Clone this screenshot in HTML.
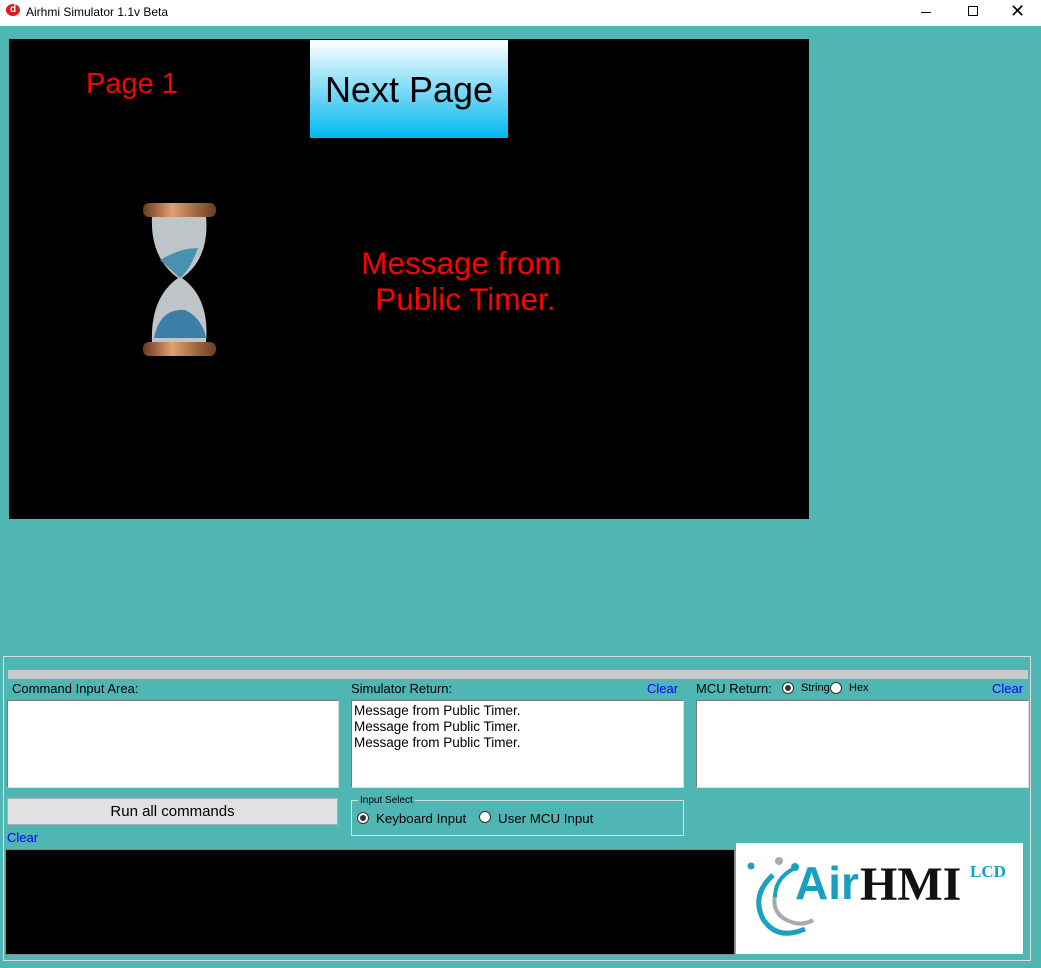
<!DOCTYPE html>
<html><head><meta charset="utf-8"><style>
*{margin:0;padding:0;box-sizing:border-box}
body{width:1041px;height:968px;background:#50b6b3;position:relative;overflow:hidden;font-family:"Liberation Sans",sans-serif}
.a{position:absolute}
.t{font-size:12px;color:#000}
.box{background:#fff;border:1px solid #7a7a7a;border-right-color:#ddd;border-bottom-color:#ddd}
.clr{color:#0000ff;font-size:13px}
.rad{width:12px;height:12px;border-radius:50%;border:1px solid #333;background:#fff}
.rad.on::after{content:"";position:absolute;left:2px;top:2px;width:6px;height:6px;border-radius:50%;background:#333}
</style></head><body>
<div class="a" style="left:0;top:0;width:1041px;height:26px;background:#fff"></div>
<div class="a" style="left:6px;top:4px;width:14px;height:12px;border-radius:50%;background:#d42020;color:#fff;font-size:10px;font-weight:bold;line-height:11px;text-align:center">d</div>
<div class="a" style="left:26px;top:5px;font-size:12px">Airhmi Simulator 1.1v Beta</div>
<div class="a" style="left:921px;top:12px;width:10px;height:1px;background:#000"></div>
<div class="a" style="left:968px;top:6px;width:10px;height:10px;border:1px solid #000"></div>
<div class="a" style="left:1010px;top:0;font-size:18px;line-height:22px">✕</div>

<div class="a" style="left:9px;top:39px;width:800px;height:480px;background:#000"></div>
<div class="a" style="left:86px;top:68px;color:#f00;font-size:29px">Page 1</div>
<div class="a" style="left:310px;top:40px;width:198px;height:98px;background:linear-gradient(#fff,#00b7f0);color:#000;font-size:36px;text-align:center;line-height:100px">Next Page</div>
<div class="a" style="left:320px;top:245px;width:282px;color:#f00;font-size:31.5px;text-align:center;line-height:36px">Message from<br>&nbsp;Public Timer.</div>
<svg class="a" style="left:140px;top:198px" width="80" height="165">
<defs><linearGradient id="cu" x1="0" x2="1"><stop offset="0" stop-color="#6a3a20"/><stop offset=".4" stop-color="#e0a070"/><stop offset="1" stop-color="#6a3a20"/></linearGradient></defs>
<path d="M12 18 Q10 60 38 80 Q10 100 12 145 L66 145 Q70 100 42 80 Q70 60 66 18 Z" fill="#dfe6ea" opacity=".85"/>
<path d="M20 62 Q40 50 58 50 Q50 72 40 80 Z" fill="#4a90b0"/>
<path d="M14 140 Q20 110 45 112 Q62 120 66 140 Z" fill="#3b7fa8"/>
<rect x="3" y="5" width="73" height="14" rx="6" fill="url(#cu)"/>
<rect x="3" y="144" width="73" height="14" rx="6" fill="url(#cu)"/>
</svg>

<div class="a" style="left:3px;top:656px;width:1028px;height:305px;border:1px solid #ddd"></div>
<div class="a" style="left:8px;top:670px;width:1020px;height:9px;background:#cbcbcb"></div>
<div class="a t" style="left:12px;top:681px;font-size:13px">Command Input Area:</div>
<div class="a t" style="left:351px;top:681px;font-size:13px">Simulator Return:</div>
<div class="a clr" style="left:647px;top:681px">Clear</div>
<div class="a t" style="left:696px;top:681px;font-size:13px">MCU Return:</div>
<div class="a rad on" style="left:782px;top:682px"></div>
<div class="a t" style="left:801px;top:682px;font-size:11px">String</div>
<div class="a rad" style="left:830px;top:682px"></div>
<div class="a t" style="left:849px;top:682px;font-size:11px">Hex</div>
<div class="a clr" style="left:992px;top:681px">Clear</div>
<div class="a box" style="left:7px;top:700px;width:332px;height:88px"></div>
<div class="a box" style="left:351px;top:700px;width:333px;height:88px;font-size:13.5px;padding:2px 2px;line-height:16px">Message from Public Timer.<br>Message from Public Timer.<br>Message from Public Timer.</div>
<div class="a box" style="left:696px;top:700px;width:333px;height:88px"></div>
<div class="a" style="left:7px;top:798px;width:331px;height:27px;background:#e1e1e1;border:1px solid #adadad;text-align:center;font-size:15px;line-height:25px">Run all commands</div>
<div class="a clr" style="left:7px;top:830px">Clear</div>
<div class="a" style="left:351px;top:800px;width:333px;height:36px;border:1px solid #ddd"></div>
<div class="a t" style="left:358px;top:795px;font-size:10px;background:#50b6b3;padding:0 2px">Input Select</div>
<div class="a rad on" style="left:357px;top:812px"></div>
<div class="a t" style="left:376px;top:811px;font-size:13.3px">Keyboard Input</div>
<div class="a rad" style="left:479px;top:811px"></div>
<div class="a t" style="left:498px;top:811px;font-size:13.3px">User MCU Input</div>
<div class="a" style="left:5px;top:849px;width:730px;height:106px;background:#000;border:1px solid #888"></div>
<div class="a" style="left:736px;top:843px;width:287px;height:111px;background:#fff"></div>
<svg class="a" style="left:745px;top:855px" width="90" height="90">
<path d="M28 20 Q6 40 18 64 Q32 86 60 74" stroke="#1aa0c0" stroke-width="5" fill="none"/>
<path d="M30 40 Q26 62 50 68 Q60 70 68 65" stroke="#aaa" stroke-width="4" fill="none"/>
<path d="M48 14 Q30 24 30 42" stroke="#1aa0c0" stroke-width="4" fill="none"/>
<circle cx="6" cy="11" r="3.5" fill="#1aa0c0"/><circle cx="34" cy="6" r="4" fill="#aaa"/><circle cx="50" cy="12" r="4" fill="#1aa0c0"/>
</svg>
<div class="a" style="left:795px;top:858px;color:#17a0c0;font-size:46px;font-weight:bold;line-height:50px">Air</div>
<div class="a" style="left:860px;top:860px;color:#111;font-size:48px;font-weight:bold;font-family:'Liberation Serif',serif;line-height:50px">HMI</div>
<div class="a" style="left:970px;top:862px;color:#17a0c0;font-size:17px;font-weight:bold;font-family:'Liberation Serif',serif">LCD</div>
</body></html>
